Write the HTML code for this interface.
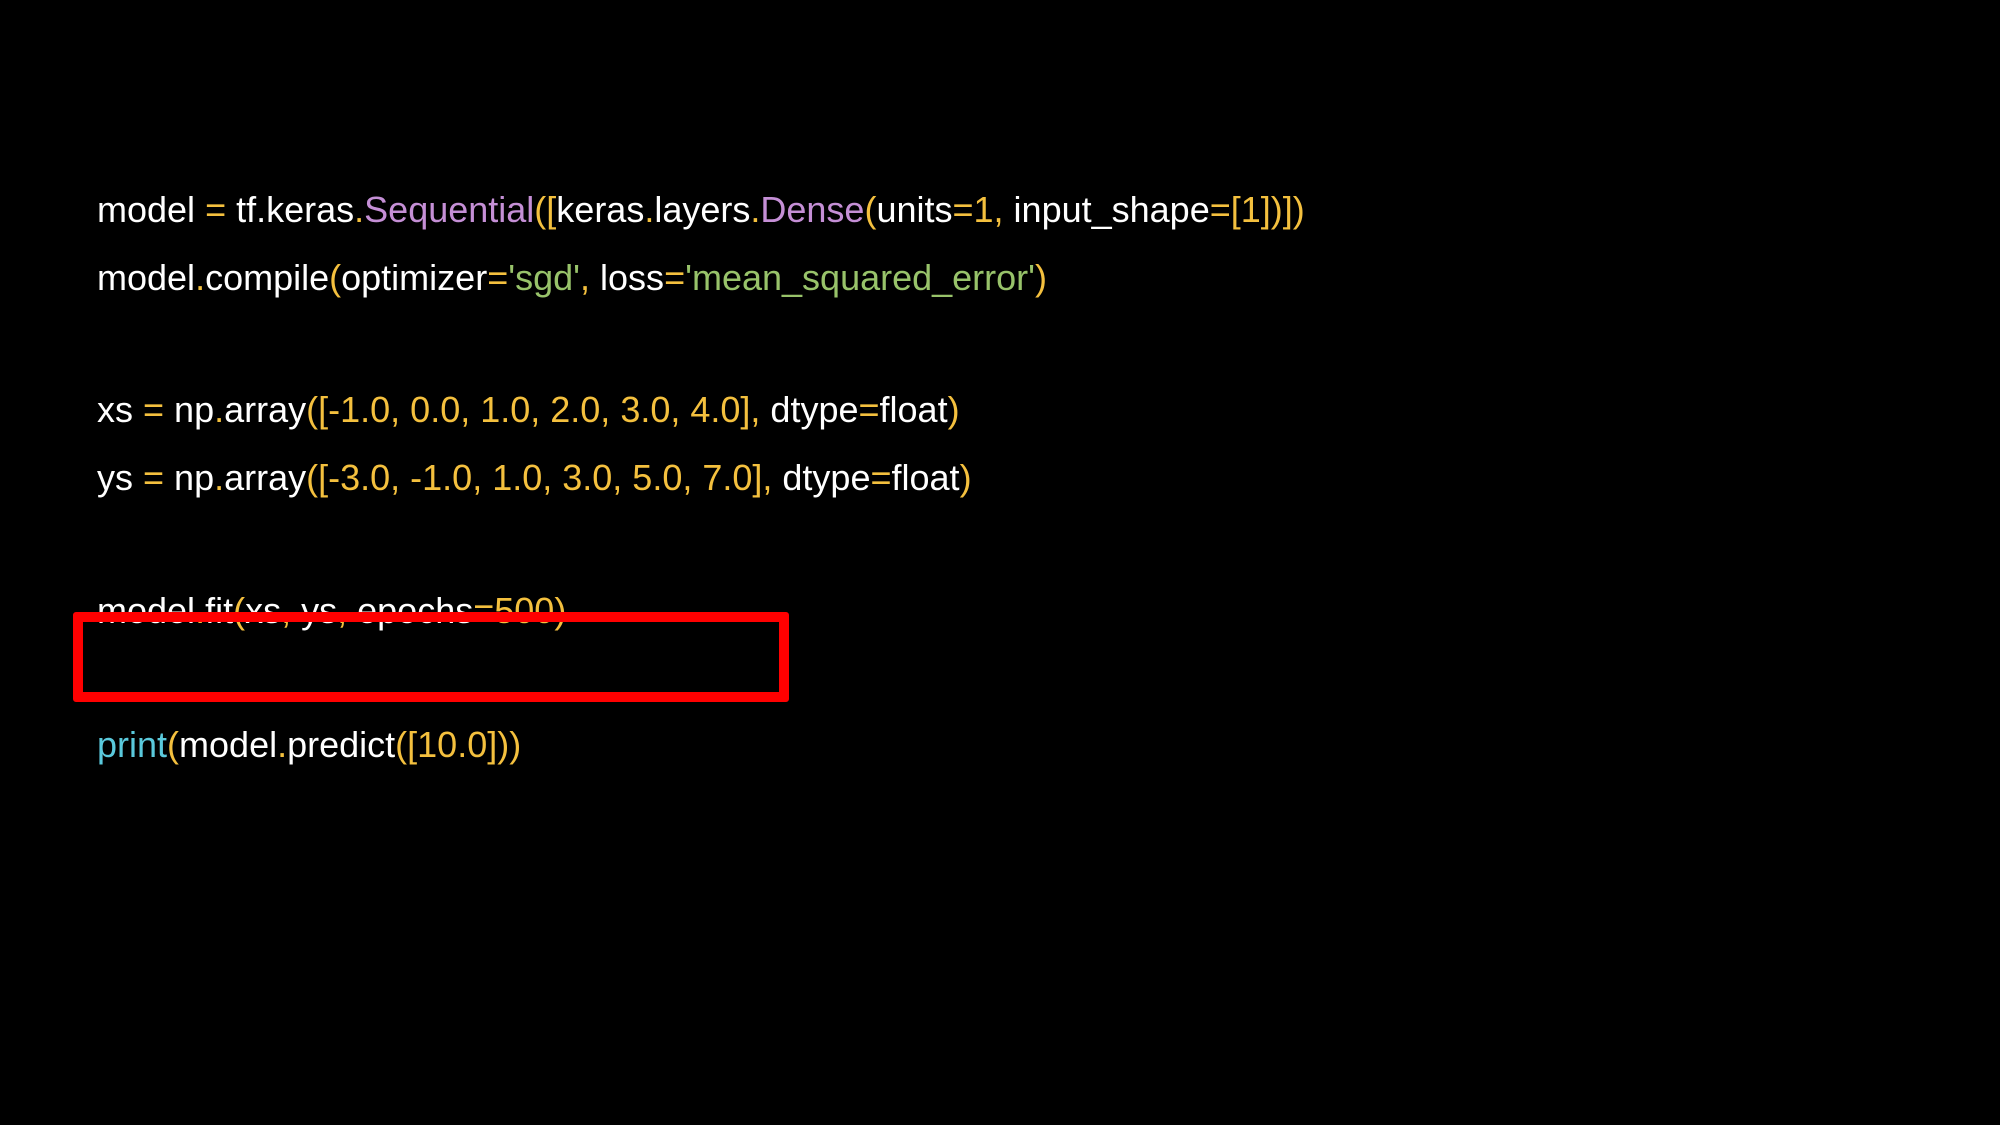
<!DOCTYPE html>
<html><head><meta charset="utf-8"><style>
html,body{margin:0;padding:0;background:#000;width:2000px;height:1125px;overflow:hidden}
.l{position:absolute;left:97px;font-family:"Liberation Sans",Arial,sans-serif;font-size:36px;line-height:36px;color:#fff;white-space:pre}
.y{color:#f4c03e}.p{color:#c58fd6}.g{color:#98c36a}.c{color:#5ac9dc}
#box{position:absolute;left:73px;top:612px;width:696px;height:70px;border:10px solid #f00;border-radius:3px}
</style></head><body>
<div class="l" style="top:192px">model <span class="y">=</span> tf.keras<span class="y">.</span><span class="p">Sequential</span><span class="y">([</span>keras<span class="y">.</span>layers<span class="y">.</span><span class="p">Dense</span><span class="y">(</span>units<span class="y">=1,</span> input_shape<span class="y">=[1])])</span></div>
<div class="l" style="top:260px">model<span class="y">.</span>compile<span class="y">(</span>optimizer<span class="y">=</span><span class="g">'sgd'</span><span class="y">,</span> loss<span class="y">=</span><span class="g">'mean_squared_error'</span><span class="y">)</span></div>
<div class="l" style="top:392px">xs <span class="y">=</span> np<span class="y">.</span>array<span class="y">([-1.0, 0.0, 1.0, 2.0, 3.0, 4.0],</span> dtype<span class="y">=</span>float<span class="y">)</span></div>
<div class="l" style="top:460px">ys <span class="y">=</span> np<span class="y">.</span>array<span class="y">([-3.0, -1.0, 1.0, 3.0, 5.0, 7.0],</span> dtype<span class="y">=</span>float<span class="y">)</span></div>
<div class="l" style="top:593px">model<span class="y">.</span>fit<span class="y">(</span>xs<span class="y">,</span> ys<span class="y">,</span> epochs<span class="y">=500)</span></div>
<div class="l" style="top:727px"><span class="c">print</span><span class="y">(</span>model<span class="y">.</span>predict<span class="y">([10.0]))</span></div>
<div id="box"></div>
</body></html>
